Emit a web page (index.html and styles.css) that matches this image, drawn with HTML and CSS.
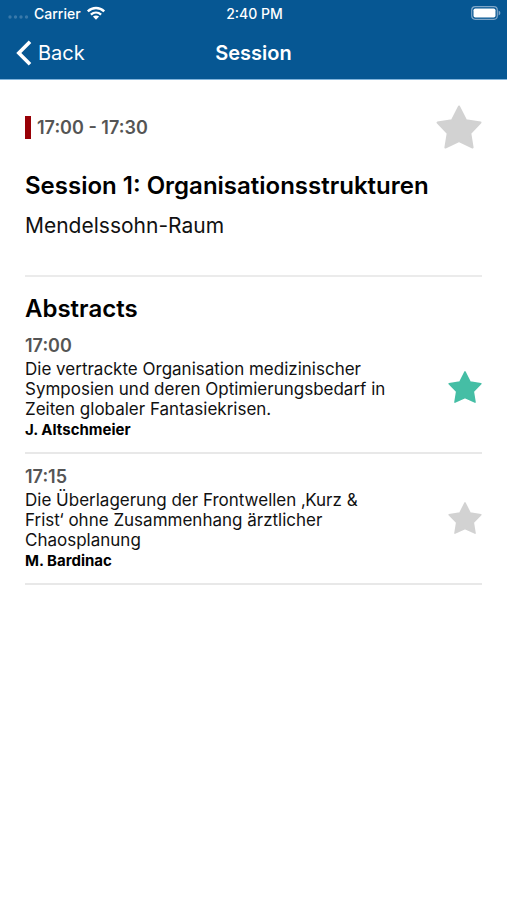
FILE: index.html
```html
<!DOCTYPE html>
<html lang="de">
<head>
<meta charset="utf-8">
<meta name="viewport" content="width=device-width, initial-scale=1">
<title>Session</title>
<link rel="stylesheet" href="styles.css">
</head>
<body>
<svg class="defs" aria-hidden="true">
  <symbol id="star" viewBox="0 0 46 44">
    <path d="M23 1.500L30 15.300L44.500 17.600L34.300 28.200L36.600 42.500L23 36.200L9.400 42.500L11.700 28.200L1.500 17.600L16 15.300Z" fill="currentColor" stroke="currentColor" stroke-width="2" stroke-linejoin="round"/>
  </symbol>
</svg>
<header class="topbar">
  <div class="status">
    <div class="carrier">
      <svg class="signal" width="21" height="6" viewBox="0 0 21 6" aria-hidden="true"><circle cx="2" cy="3" r="1.700"/><circle cx="7.500" cy="3" r="1.700"/><circle cx="13" cy="3" r="1.700"/><circle cx="18.500" cy="3" r="1.700"/></svg>
      <span>Carrier</span>
      <svg class="wifi" width="20" height="15" viewBox="0 0 20 15" aria-hidden="true"><path d="M1.800 5.300C6.500.900 13.500.900 18.200 5.300M4.900 8.600C7.900 5.900 12.100 5.900 15.100 8.600" fill="none" stroke="#fff" stroke-width="2.400"/><path d="M6.900 10.600Q10 8.200 13.100 10.600L10 13.800Z" fill="#fff"/></svg>
    </div>
    <span class="clock">2:40 PM</span>
    <svg class="battery" width="30" height="14" viewBox="0 0 30 14" aria-hidden="true"><rect x=".7" y=".7" width="25.600" height="12.600" rx="3.500" fill="none" stroke="#7fa6c8" stroke-width="1.200"/><rect x="2.500" y="2.500" width="22" height="9" rx="1.800" fill="#fff"/><path d="M27.600 4.500Q29.400 5.300 29.400 7T27.600 9.500Z" fill="#7fa6c8"/></svg>
  </div>
  <nav class="nav">
    <a class="back" href="#"><svg width="16" height="26" viewBox="0 0 16 26" aria-hidden="true"><path d="M14 1.700L2.800 13L14 24.300" fill="none" stroke="#fff" stroke-width="3.600"/></svg><span>Back</span></a>
    <h1 class="nav-title">Session</h1>
  </nav>
</header>
<main class="content">
  <section class="session">
    <div class="session-top">
      <time class="slot">17:00 - 17:30</time>
      <button class="fav fav-large" type="button" aria-label="Session merken"><svg><use href="#star"/></svg></button>
    </div>
    <h2 class="heading">Session 1: Organisationsstrukturen</h2>
    <p class="room">Mendelssohn-Raum</p>
  </section>
  <section class="abstracts">
    <h2 class="heading">Abstracts</h2>
    <article class="abstract">
      <div class="details">
        <time class="time">17:00</time>
        <h3 class="topic">Die vertrackte Organisation medizinischer Symposien und deren Optimierungsbedarf in Zeiten globaler Fantasiekrisen.</h3>
        <p class="author">J. Altschmeier</p>
      </div>
      <button class="fav active" type="button" aria-label="Abstract merken" aria-pressed="true"><svg><use href="#star"/></svg></button>
    </article>
    <article class="abstract">
      <div class="details">
        <time class="time">17:15</time>
        <h3 class="topic">Die Überlagerung der Frontwellen ‚Kurz &amp; Frist‘ ohne Zusammenhang ärztlicher Chaosplanung</h3>
        <p class="author">M. Bardinac</p>
      </div>
      <button class="fav" type="button" aria-label="Abstract merken" aria-pressed="false"><svg><use href="#star"/></svg></button>
    </article>
  </section>
</main>
</body>
</html>
```

FILE: styles.css
```css
* { box-sizing: border-box; }
body {
  margin: 0;
  background: #fff;
  color: #111;
  font-family: Inter, "Liberation Sans", sans-serif;
}
h1, h2, h3, p { margin: 0; }
svg { display: block; }
.defs { display: none; }

.topbar {
  background: #065793;
  color: #fff;
  border-bottom: 1px solid #82b5dc;
}
.status {
  display: grid;
  grid-template-columns: 1fr auto 1fr;
  align-items: center;
  height: 26px;
  padding: 0 6px 0 8px;
  font-size: 14px;
  font-weight: 500;
}
.carrier { display: flex; align-items: center; gap: 5px; }
.signal { fill: #3979aa; margin-top: 8px; }
.battery { justify-self: end; }
.nav {
  display: grid;
  grid-template-columns: 1fr auto 1fr;
  align-items: center;
  height: 53px;
  padding: 0 16px;
}
.back {
  display: flex;
  align-items: center;
  gap: 6px;
  color: #fff;
  font-size: 20px;
  text-decoration: none;
}
.nav-title { font-size: 20px; font-weight: 600; }

.content { padding: 24px 25px; }
.session {
  padding-bottom: 35px;
  border-bottom: 2px solid #ebebeb;
}
.session-top {
  display: flex;
  align-items: center;
  justify-content: space-between;
  margin-bottom: 22px;
}
.slot {
  padding-left: 6px;
  border-left: 6px solid #980006;
  color: #555;
  font-size: 18px;
  font-weight: 600;
  line-height: 23px;
}
.heading {
  color: #000;
  font-size: 24px;
  font-weight: 600;
  line-height: 28px;
}
.room {
  margin-top: 12px;
  font-size: 21px;
  line-height: 28px;
}
.abstracts { padding-top: 18px; }
.abstract {
  display: flex;
  align-items: center;
  justify-content: space-between;
  padding: 10px 0 11px;
  border-bottom: 2px solid #e8e8e8;
}
.details { flex: 0 1 364px; }
.time {
  display: block;
  color: #555;
  font-size: 18px;
  font-weight: 600;
  line-height: 26px;
}
.topic {
  font-size: 17px;
  font-weight: 400;
  line-height: 20px;
}
.author {
  color: #000;
  font-size: 15px;
  font-weight: 700;
  line-height: 22px;
}
.fav {
  flex: none;
  width: 34px;
  padding: 0;
  border: 0;
  background: none;
  color: #d2d2d2;
  cursor: pointer;
}
.fav svg { width: 100%; height: 34px; }
.fav-large { width: 46px; }
.fav-large svg { height: 46px; }
.active { color: #45bea5; }
```
